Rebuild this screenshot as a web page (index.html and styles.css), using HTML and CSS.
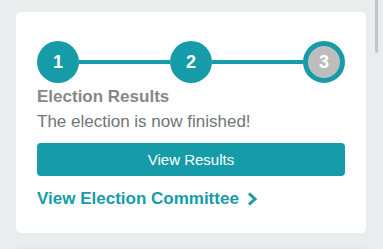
FILE: index.html
```html
<!DOCTYPE html>
<html lang="en">
  <head>
    <meta charset="UTF-8" />
    <meta name="viewport" content="width=device-width, initial-scale=1.0" />
    <title>Election</title>
    <link rel="stylesheet" href="styles.css">
  </head>
  <body>
    <div class="scroll-thumb"></div>

    <div class="card">
      <div class="stepper">
        <div class="step done">1</div>
        <div class="step-line"></div>
        <div class="step done">2</div>
        <div class="step-line"></div>
        <div class="step current">3</div>
      </div>

      <h2 class="title">Election Results</h2>
      <p class="status">The election is now finished!</p>

      <button class="btn">View Results</button>

      <a class="link" href="#">
        View Election Committee
        <svg class="chevron" width="11" height="14" viewBox="0 0 11 14">
          <path d="M2 1.5 L8 7 L2 12.5" fill="none" stroke="#159ca8" stroke-width="3" />
        </svg>
      </a>
    </div>

    <div class="card next"></div>
  </body>
</html>
```

FILE: styles.css
```css
* {
  margin: 0;
  padding: 0;
  box-sizing: border-box;
}

body {
  font-family: "Liberation Sans", Arial, sans-serif;
  background: #e9eded;
  padding: 12px 0 0 16px;
  height: 249px;
  overflow: hidden;
}

.scroll-thumb {
  position: absolute;
  top: 0;
  left: 375px;
  width: 3px;
  height: 53px;
  background: #c3c6c7;
  border-radius: 0 0 2px 2px;
}

.card {
  width: 350px;
  height: 221px;
  background: #ffffff;
  border-radius: 5px;
  padding: 29px 21px 0;
}

.card.next {
  margin-top: 17px;
  height: 10px;
  box-shadow: 0 0 8px rgba(0, 0, 0, 0.07);
}

.stepper {
  display: flex;
  align-items: center;
}

.step {
  width: 42px;
  height: 42px;
  border-radius: 50%;
  background: #159ca8;
  color: #fff;
  font-size: 18px;
  font-weight: bold;
  display: flex;
  align-items: center;
  justify-content: center;
  flex-shrink: 0;
}

.step.current {
  background: #bdbdbd;
  border: 5px solid #159ca8;
}

.step-line {
  flex: 1;
  height: 4px;
  background: #159ca8;
}

.title {
  margin-top: 4px;
  font-size: 17px;
  line-height: 20px;
  font-weight: bold;
  color: #878787;
}

.status {
  margin-top: 5px;
  font-size: 17px;
  line-height: 20px;
  color: #6e757b;
}

.btn {
  display: block;
  width: 100%;
  height: 33px;
  margin-top: 11px;
  border: none;
  border-radius: 4px;
  background: #159ca8;
  color: #fff;
  font-family: inherit;
  font-size: 15px;
}

.link {
  display: flex;
  align-items: center;
  gap: 8px;
  margin-top: 13px;
  font-size: 17px;
  line-height: 20px;
  font-weight: bold;
  color: #159ca8;
  text-decoration: none;
}
```
